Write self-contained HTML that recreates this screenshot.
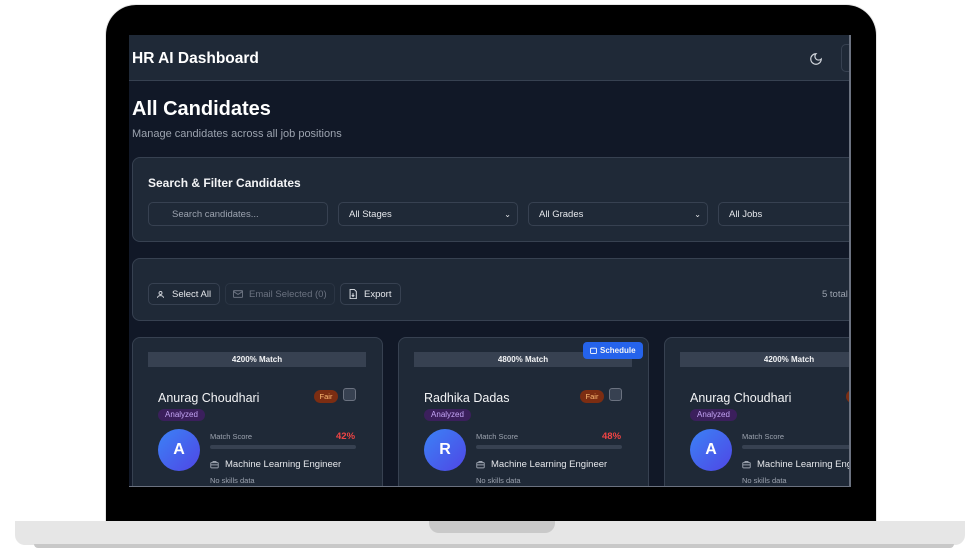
<!DOCTYPE html>
<html><head><meta charset="utf-8"><style>
*{box-sizing:border-box;margin:0;padding:0}
body{width:980px;height:551px;background:#fff;position:relative;overflow:hidden;font-family:"Liberation Sans",sans-serif;color:#f3f4f6}
.abs{position:absolute}
#bezel{left:106px;top:5px;width:770px;height:520px;background:#000;border-radius:30px 30px 0 0;box-shadow:0 0 0 1px #e5e5e5}
#base{left:15px;top:521px;width:950px;height:24px;background:#e6e6e6;border-radius:0 0 10px 10px}
#shadow{left:34px;top:544px;width:920px;height:4px;background:#c8c8c8;border-radius:0 0 4px 4px}
#notch{left:429px;top:521px;width:126px;height:12px;background:#c9c9c9;border-radius:0 0 10px 10px}
#screen{left:129px;top:35px;width:722px;height:452px;background:#111827;overflow:hidden;border-right:2px solid #6b7280;border-bottom:1px solid #6b7280}
#screen .abs{position:absolute}
.hdr{left:0;top:0;width:722px;height:46px;background:#1f2937;border-bottom:1px solid #374151}
.card{background:#1f2937;border:1px solid #374151;border-radius:8px}
.inp{height:24px;border:1px solid #374151;border-radius:5px;background:#1f2937;font-size:9.5px;line-height:24px;padding-left:10px;color:#e5e7eb}
.btn{height:22px;border:1px solid #374151;border-radius:5px;font-size:9.5px;line-height:21px;padding-left:8px;color:#e5e7eb}
.mbar{height:15px;background:#374151;font-size:8px;font-weight:bold;text-align:center;line-height:15px}
.name{font-size:12.5px;color:#f3f4f6}
.fair{width:24px;height:13px;border-radius:7px;background:#7c2d12;color:#fdba74;font-size:7.5px;text-align:center;line-height:13px}
.chk{width:13px;height:13px;border:1px solid #6b7280;border-radius:3px;background:#374151}
.an{width:47px;height:12px;border-radius:6px;background:#3b1f5c;color:#c4a5f5;font-size:8px;text-align:center;line-height:12px}
.av{width:42px;height:42px;border-radius:50%;background:linear-gradient(135deg,#3b82f6,#4f46e5);font-size:16px;font-weight:bold;text-align:center;line-height:42px;color:#fff}
.lbl{font-size:7.5px;color:#9ca3af}
.pct{font-size:9.5px;font-weight:bold;color:#ef4444}
.pb{height:4px;border-radius:2px;background:#374151}
.job{font-size:9.5px;color:#e5e7eb}
</style></head><body>
<div class="abs" id="bezel"></div>
<div class="abs" id="base"></div>
<div class="abs" id="shadow"></div>
<div class="abs" id="notch"></div>
<div class="abs" id="screen">
 <div class="abs hdr"></div>
 <div class="abs" style="left:3px;top:15px;font-size:15.5px;font-weight:bold;color:#fff">HR AI Dashboard</div>
 <svg class="abs" style="left:680px;top:17px" width="14" height="14" viewBox="0 0 24 24" fill="none" stroke="#d1d5db" stroke-width="2"><path d="M12 3a6 6 0 0 0 9 9 9 9 0 1 1-9-9z"/></svg>
 <div class="abs" style="left:712px;top:9px;width:20px;height:28px;border:1px solid #374151;border-radius:5px"></div>
 <div class="abs" style="left:3px;top:63px;font-size:20px;font-weight:bold;color:#fff">All Candidates</div>
 <div class="abs" style="left:3px;top:93px;font-size:11px;color:#9ca3af">Manage candidates across all job positions</div>
 <div class="abs card" style="left:3px;top:122px;width:730px;height:85px"></div>
 <div class="abs" style="left:19px;top:141px;font-size:12px;font-weight:bold">Search &amp; Filter Candidates</div>
 <div class="abs inp" style="left:19px;top:167px;width:180px;padding-left:23px;color:#9ca3af">Search candidates...</div>
 <div class="abs inp" style="left:209px;top:167px;width:180px">All Stages<span style="position:absolute;right:6px;font-size:8px">&#8964;</span></div>
 <div class="abs inp" style="left:399px;top:167px;width:180px">All Grades<span style="position:absolute;right:6px;font-size:8px">&#8964;</span></div>
 <div class="abs inp" style="left:589px;top:167px;width:180px">All Jobs</div>
 <div class="abs card" style="left:3px;top:223px;width:730px;height:63px"></div>
 <div class="abs btn" style="left:19px;top:248px;width:72px;padding-left:23px">Select All</div>
 <svg class="abs" style="left:27px;top:255px" width="9" height="9" viewBox="0 0 24 24" fill="none" stroke="#d1d5db" stroke-width="2.5"><circle cx="12" cy="8" r="4"/><path d="M4 21c0-4 4-6 8-6s8 2 8 6"/></svg>
 <div class="abs btn" style="left:96px;top:248px;width:110px;padding-left:23px;color:#6b7280;border-color:#2b3544">Email Selected (0)</div>
 <svg class="abs" style="left:104px;top:255px" width="10" height="8" viewBox="0 0 24 18" fill="none" stroke="#6b7280" stroke-width="2.5"><rect x="1" y="1" width="22" height="16" rx="2"/><path d="M1 3l11 7 11-7"/></svg>
 <div class="abs btn" style="left:211px;top:248px;width:61px;padding-left:23px">Export</div>
 <svg class="abs" style="left:220px;top:254px" width="8" height="10" viewBox="0 0 18 24" fill="none" stroke="#d1d5db" stroke-width="2.5"><path d="M2 1h10l5 5v17H2z"/><path d="M9 10v8M6 15l3 3 3-3"/></svg>
 <div class="abs" style="left:693px;top:254px;font-size:9.5px;color:#9ca3af">5 total</div>

 <div class="abs card" style="left:3px;top:302px;width:251px;height:170px"></div>
 <div class="abs mbar" style="left:19px;top:317px;width:218px">4200% Match</div>
 <div class="abs name" style="left:29px;top:356px">Anurag Choudhari</div>
 <div class="abs fair" style="left:185px;top:355px">Fair</div>
 <div class="abs chk" style="left:214px;top:353px"></div>
 <div class="abs an" style="left:29px;top:374px">Analyzed</div>
 <div class="abs av" style="left:29px;top:394px">A</div>
 <div class="abs lbl" style="left:81px;top:397px">Match Score</div>
 <div class="abs pct" style="left:207px;top:396px">42%</div>
 <div class="abs pb" style="left:81px;top:410px;width:146px"></div>
 <div class="abs job" style="left:96px;top:424px">Machine Learning Engineer</div>
 <svg class="abs" style="left:81px;top:425px" width="9" height="9" viewBox="0 0 24 24" fill="none" stroke="#9ca3af" stroke-width="2.5"><rect x="2" y="7" width="20" height="14" rx="2"/><path d="M8 7V4h8v3M2 13h20"/></svg>
 <div class="abs lbl" style="left:81px;top:441px">No skills data</div>

 <div class="abs card" style="left:269px;top:302px;width:251px;height:170px"></div>
 <div class="abs mbar" style="left:285px;top:317px;width:218px">4800% Match</div>
 <div class="abs" style="left:454px;top:307px;width:60px;height:17px;background:#2563eb;border-radius:4px;font-size:8px;font-weight:bold;line-height:17px;padding-left:17px">Schedule</div>
 <svg class="abs" style="left:461px;top:312px" width="7" height="7" viewBox="0 0 24 24" fill="none" stroke="#fff" stroke-width="3"><rect x="2" y="4" width="20" height="18" rx="2"/></svg>
 <div class="abs name" style="left:295px;top:356px">Radhika Dadas</div>
 <div class="abs fair" style="left:451px;top:355px">Fair</div>
 <div class="abs chk" style="left:480px;top:353px"></div>
 <div class="abs an" style="left:295px;top:374px">Analyzed</div>
 <div class="abs av" style="left:295px;top:394px">R</div>
 <div class="abs lbl" style="left:347px;top:397px">Match Score</div>
 <div class="abs pct" style="left:473px;top:396px">48%</div>
 <div class="abs pb" style="left:347px;top:410px;width:146px"></div>
 <div class="abs job" style="left:362px;top:424px">Machine Learning Engineer</div>
 <svg class="abs" style="left:347px;top:425px" width="9" height="9" viewBox="0 0 24 24" fill="none" stroke="#9ca3af" stroke-width="2.5"><rect x="2" y="7" width="20" height="14" rx="2"/><path d="M8 7V4h8v3M2 13h20"/></svg>
 <div class="abs lbl" style="left:347px;top:441px">No skills data</div>

 <div class="abs card" style="left:535px;top:302px;width:251px;height:170px"></div>
 <div class="abs mbar" style="left:551px;top:317px;width:218px">4200% Match</div>
 <div class="abs name" style="left:561px;top:356px">Anurag Choudhari</div>
 <div class="abs fair" style="left:717px;top:355px">Fair</div>
 <div class="abs an" style="left:561px;top:374px">Analyzed</div>
 <div class="abs av" style="left:561px;top:394px">A</div>
 <div class="abs lbl" style="left:613px;top:397px">Match Score</div>
 <div class="abs pb" style="left:613px;top:410px;width:146px"></div>
 <div class="abs job" style="left:628px;top:424px;white-space:nowrap">Machine Learning Engineer</div>
 <svg class="abs" style="left:613px;top:425px" width="9" height="9" viewBox="0 0 24 24" fill="none" stroke="#9ca3af" stroke-width="2.5"><rect x="2" y="7" width="20" height="14" rx="2"/><path d="M8 7V4h8v3M2 13h20"/></svg>
 <div class="abs lbl" style="left:613px;top:441px">No skills data</div>
</div>
</body></html>
